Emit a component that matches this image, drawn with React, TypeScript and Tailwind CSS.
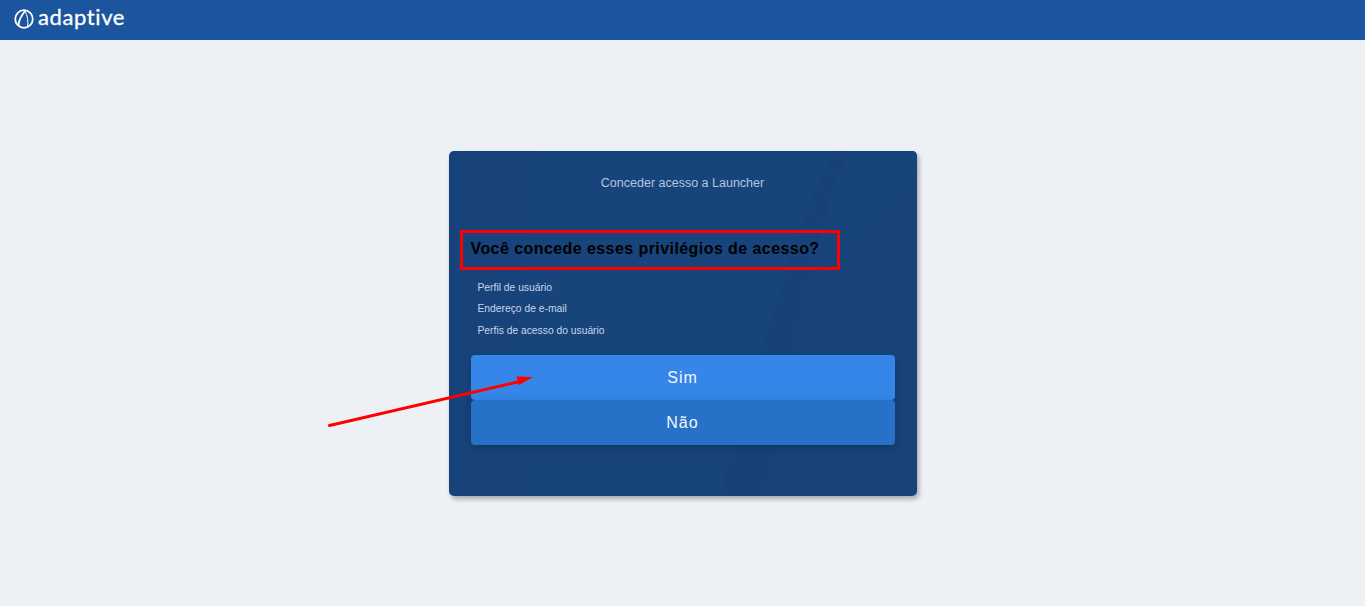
const permissions = ["Perfil de usuário", "Endereço de e-mail", "Perfis de acesso do usuário"];

function LogoMark() {
  return (
    <svg className="-translate-y-[1.5px]" width="21" height="21" viewBox="0 0 21 21" fill="none" stroke="white" strokeWidth="1.8">
      <circle cx="10" cy="10.5" r="8.8" />
      <path d="M11 2.5 C 7.5 7 4.5 12 4.5 17" />
      <path d="M11 2.5 C 13.5 7 14.5 12 13.5 18.5" strokeWidth="1" />
    </svg>
  );
}

export default function App() {
  return (
    <div className="relative min-h-[606px] bg-[#edf0f5] font-['Liberation_Sans',Arial,sans-serif] overflow-hidden">
      <header className="h-10 bg-[#1a559e] flex items-center pl-[14px] gap-[3px]">
        <LogoMark />
        <span className="text-white text-[22px] leading-none tracking-[0.6px] font-['Lato',sans-serif] pb-[6px] [-webkit-text-stroke:0.3px_white]">adaptive</span>
      </header>

      <main className="flex justify-center pt-[111px]">
        <div className="relative w-[468px] h-[345px] rounded-[5px] bg-[#17437a] shadow-[2px_3px_5px_rgba(0,0,0,0.3)] px-[22px] overflow-hidden">
          {/* faint swooshes behind the card content */}
          <svg className="absolute inset-0" width="468" height="345" viewBox="0 0 468 345" fill="none">
            <path d="M90 0 C 60 120 70 260 72 345 L 272 345 C 290 260 340 130 468 30 L 468 0 Z" fill="#17447b" />
            <path d="M400 0 C 360 80 340 250 314 345 L 272 345 C 300 240 340 90 385 0 Z" fill="#174279" />
          </svg>

          <div className="relative">
            <p className="pt-[24px] text-center text-[12.5px] leading-4 text-[#b3c6e0]">Conceder acesso a Launcher</p>
            <h2 className="mt-[48px] text-[16px] leading-5 font-bold text-black tracking-[0.43px]">Você concede esses privilégios de acesso?</h2>
            <ul className="mt-[18px] pl-[7px] text-[10.3px] text-[#c8d6ea]">
              {permissions.map((p, i) => (
                <li key={p} className={i === 1 ? "h-[22px] leading-[21px]" : "h-[21px] leading-[21px]"}>{p}</li>
              ))}
            </ul>
            <div className="mt-[14px] flex flex-col">
              <button className="h-[45px] rounded-[4px] bg-[#3586e8] text-[#f2f7fe] text-[16px] tracking-[1px] shadow-[0_3px_8px_rgba(0,0,0,0.15)]">Sim</button>
              <button className="h-[45px] rounded-[4px] bg-[#2871c8] text-[#f2f7fe] text-[16px] tracking-[1px] shadow-[0_3px_8px_rgba(0,0,0,0.2)]">Não</button>
            </div>
          </div>
        </div>
      </main>

      {/* annotations on top of the screenshot */}
      <div className="absolute left-[460px] top-[230px] w-[380px] h-[40px] border-[3px] border-[#ff0000] rounded-[1px]" />
      <svg className="absolute left-0 top-0 pointer-events-none" width="1365" height="606" fill="none">
        <line x1="329.5" y1="425.5" x2="522" y2="381" stroke="#ff0000" strokeWidth="3" strokeLinecap="round" />
        <polygon points="533,377 516.5,376.5 519,385" fill="#ff0000" />
      </svg>
    </div>
  );
}
